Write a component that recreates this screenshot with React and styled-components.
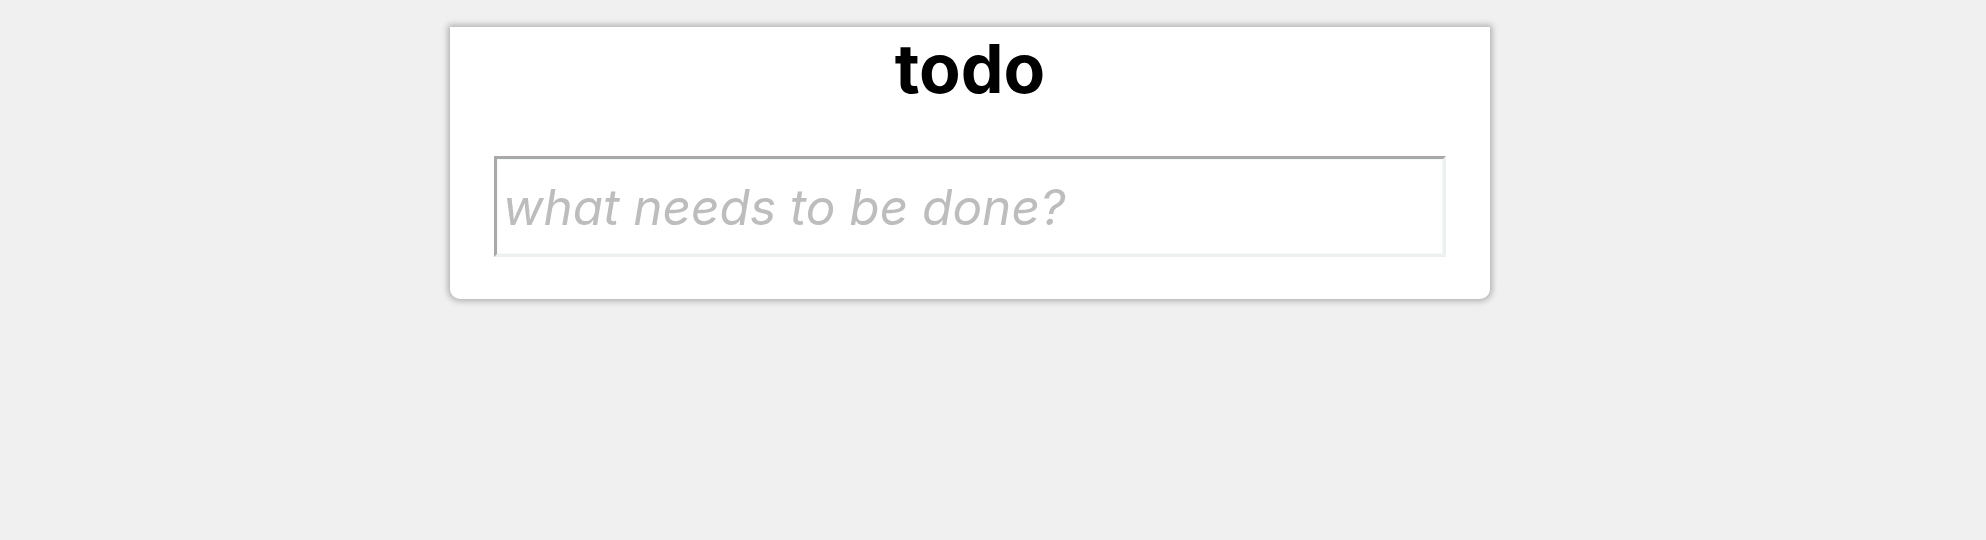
import React from "react";
import styled, { createGlobalStyle } from "styled-components";

const GlobalStyle = createGlobalStyle`
  html, body {
    margin: 0;
    padding: 0;
    background-color: #f0f0f0;
    font-family: Inter, "Liberation Sans", Arial, sans-serif;
  }
`;

export default function App() {
  return (
    <>
      <GlobalStyle />
      <Page>
        <Card>
          <Title>todo</Title>
          <TodoInput type="text" placeholder="what needs to be done?" />
        </Card>
      </Page>
    </>
  );
}

const Page = styled.div`
  width: 100%;
  height: 540px;
  padding: 27px 0 0 450px;
  box-sizing: border-box;
`;

const Card = styled.div`
  box-sizing: border-box;
  width: 1040px;
  padding: 7px 44px 42px 44px;
  background-color: #ffffff;
  border-radius: 0 0 10px 10px;
  box-shadow: 0 0 6px 2px rgba(0, 0, 0, 0.28);
  display: flex;
  flex-direction: column;
  align-items: center;
`;

const Title = styled.h1`
  margin: 0 0 54px 0;
  font-family: Inter, "Liberation Sans", Arial, sans-serif;
  font-size: 68px;
  font-weight: bold;
  line-height: 1;
  color: #000;
`;

const TodoInput = styled.input`
  box-sizing: border-box;
  width: 100%;
  height: 101px;
  padding: 0 6px;
  border-style: solid;
  border-width: 3px;
  border-color: #a9a9a9 #efefef #efefef #a9a9a9;
  box-shadow: inset 0 0 0 1px #f0fbfb;
  background-color: #fff;
  font-family: Inter, "Liberation Sans", sans-serif;
  font-size: 49.5px;
  font-style: italic;
  color: #333;
  outline: none;

  &::placeholder {
    color: #bdbdbd;
    font-style: italic;
  }
`;
